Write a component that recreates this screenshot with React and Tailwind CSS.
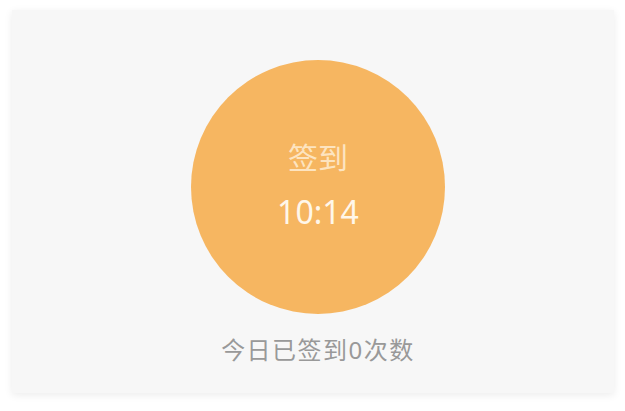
import React from "react";

const App = () => {
  return (
    <div
      className="w-[625px] h-[411px] bg-white pt-[10px] pl-[12px] pr-[11px]"
      style={{ fontFamily: '"Noto Sans", "Noto Sans CJK SC", sans-serif' }}
    >
      {/* Card */}
      <div className="h-[383px] bg-[#f7f7f7] shadow-[0_2px_8px_rgba(0,0,0,0.08)] flex flex-col items-center pt-[50px] pl-[10px]">
        {/* Sign-in button */}
        <div className="w-[254px] h-[254px] rounded-full bg-[#f6b661] flex flex-col items-center justify-center gap-[14px] pb-[4px]">
          <span className="text-[30px] leading-[40px] text-[#fde4c0]">签到</span>
          <span className="text-[32px] leading-[40px] text-[#fff7ea]">10:14</span>
        </div>
        <p className="mt-[20px] text-[24px] leading-[32px] tracking-[1.5px] text-[#999999]">
          今日已签到0次数
        </p>
      </div>
    </div>
  );
};

export default App;
